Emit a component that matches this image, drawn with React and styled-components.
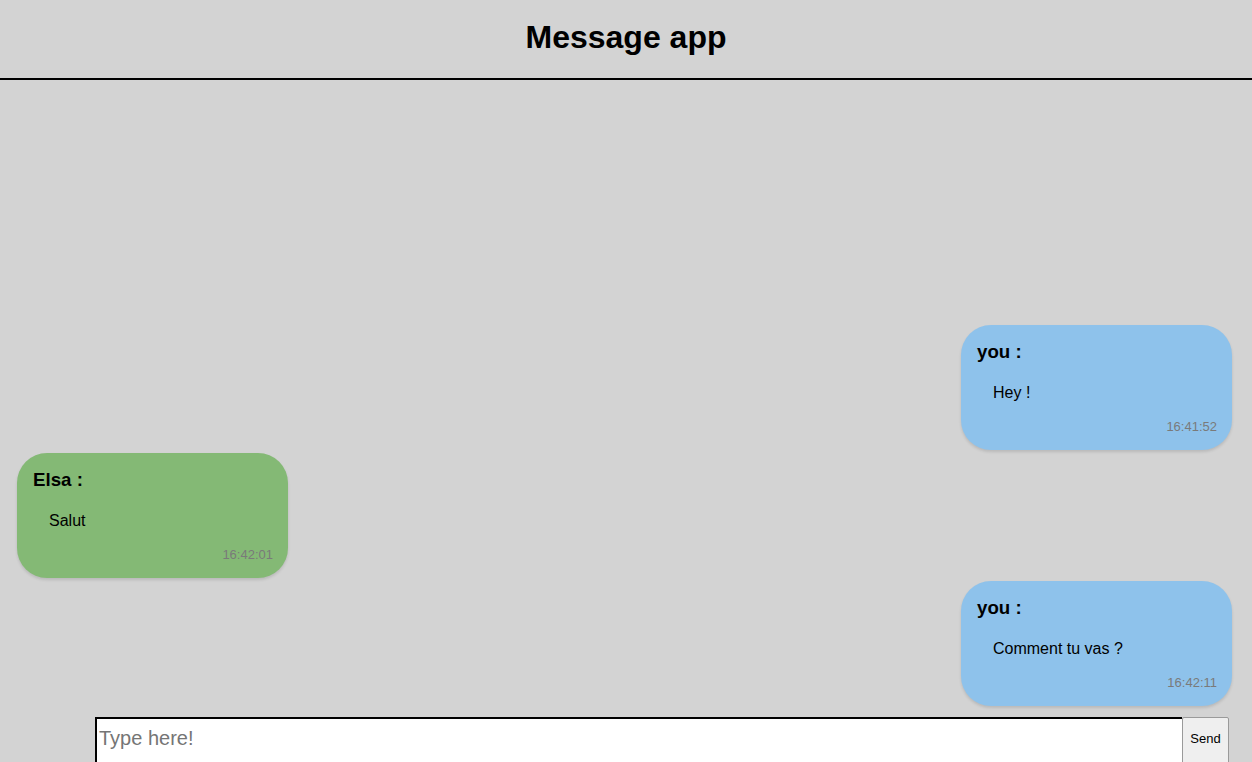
import React from 'react'
import styled, { createGlobalStyle } from 'styled-components'

const GlobalStyle = createGlobalStyle`
    html, body {
        margin: 0;
        padding: 0;
        background: #d3d3d3;
        font-family: 'Liberation Sans', Arial, sans-serif;
    }
`;

const Page = styled.div`
    height: 100vh;
    display: flex;
    flex-direction: column;
    overflow: hidden;
    background: #d3d3d3;
`;

const Header = styled.header`
    height: 78px;
    flex-shrink: 0;
    display: flex;
    align-items: center;
    justify-content: center;
    border-bottom: 2px solid #000000;
`;

const Title = styled.h1`
    margin: 0 0 4px;
    font-size: 32px;
    font-weight: 700;
    color: #000000;
`;

const Messages = styled.main`
    flex: 1;
    display: flex;
    flex-direction: column;
    justify-content: flex-end;
    gap: 3px;
    padding: 0 20px 11px 17px;
    overflow: hidden;
`;

const Bubble = styled.div`
    width: 271px;
    box-sizing: border-box;
    align-self: ${props => props.mine ? 'flex-end' : 'flex-start'};
    background: ${props => props.mine ? '#8ec2eb' : '#84b975'};
    border-radius: 30px;
    padding: 16px 15px 16px 16px;
    box-shadow: 0 2px 3px rgba(0, 0, 0, 0.12);
`;

const Author = styled.div`
    font-size: 18.72px;
    font-weight: 700;
    line-height: 21px;
    color: #000000;
`;

const Text = styled.div`
    margin-top: 22px;
    padding-left: 16px;
    font-size: 16px;
    line-height: 18px;
    color: #000000;
`;

const Time = styled.div`
    margin-top: 17px;
    font-size: 13px;
    line-height: 15px;
    text-align: right;
    color: #7a7a7a;
`;

const Footer = styled.form`
    height: 45px;
    flex-shrink: 0;
    display: flex;
    padding-left: 95px;
    padding-right: 23px;
`;

const Input = styled.input`
    flex: 1;
    height: 50px;
    box-sizing: border-box;
    border: 2px solid #000000;
    border-right: none;
    padding: 0 2px 8px;
    font-family: 'Liberation Sans', Arial, sans-serif;
    font-size: 20px;
    color: #000000;
    background: #ffffff;
    outline: none;
    &::placeholder {
        color: #757575;
    }
`;

const SendButton = styled.button`
    width: 47px;
    height: 50px;
    box-sizing: border-box;
    padding: 0 0 8px;
    background: #efefef;
    border: 1px solid #9a9a9a;
    border-radius: 2px 2px 0 0;
    font-family: 'Liberation Sans', Arial, sans-serif;
    font-size: 13px;
    color: #000000;
`;

const messages = [
    { author: 'you', text: 'Hey !', time: '16:41:52', mine: true },
    { author: 'Elsa', text: 'Salut', time: '16:42:01', mine: false },
    { author: 'you', text: 'Comment tu vas ?', time: '16:42:11', mine: true },
];

const App = () => {
    return (
        <Page>
            <GlobalStyle />
            <Header>
                <Title>Message app</Title>
            </Header>
            <Messages>
                {messages.map((m, i) => (
                    <Bubble key={i} mine={m.mine}>
                        <Author>{m.author} :</Author>
                        <Text>{m.text}</Text>
                        <Time>{m.time}</Time>
                    </Bubble>
                ))}
            </Messages>
            <Footer onSubmit={e => e.preventDefault()}>
                <Input type="text" placeholder="Type here!" />
                <SendButton type="submit">Send</SendButton>
            </Footer>
        </Page>
    )
}

export default App;
